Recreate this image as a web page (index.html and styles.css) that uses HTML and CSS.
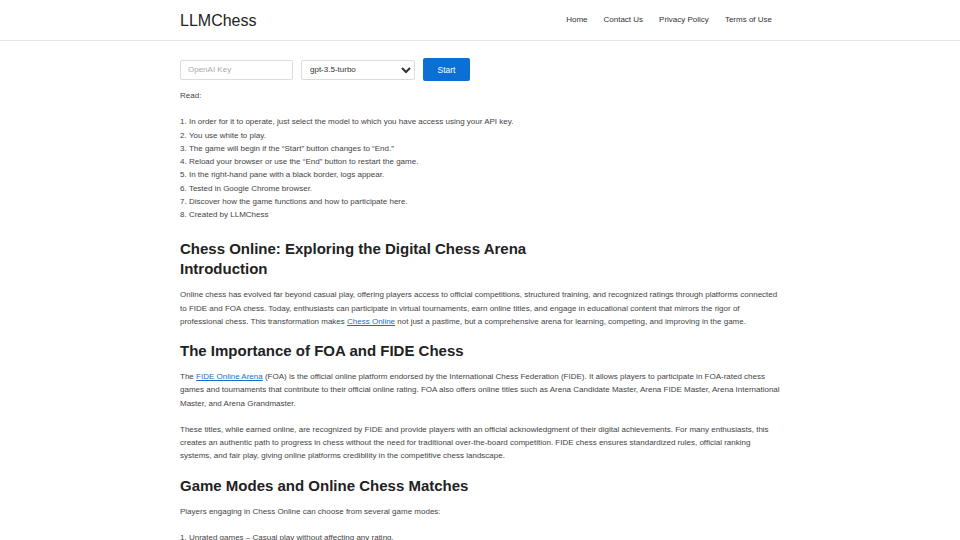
FILE: index.html
```html
<!DOCTYPE html>
<html lang="en">
<head>
<meta charset="utf-8">
<title>LLMChess</title>
<link rel="stylesheet" href="styles.css">
</head>
<body>
<header class="site-header">
  <div class="container header-inner">
    <a class="logo" href="#">LLMChess</a>
    <nav class="nav">
      <a href="#">Home</a>
      <a href="#">Contact Us</a>
      <a href="#">Privacy Policy</a>
      <a href="#">Terms of Use</a>
    </nav>
  </div>
</header>
<main class="container main">
  <div class="controls">
    <input class="key-input" type="text" placeholder="OpenAI Key">
    <select class="model-select">
      <option>gpt-3.5-turbo</option>
    </select>
    <button class="start-btn" type="button">Start</button>
  </div>
  <p class="read">Read:</p>
  <ol class="steps">
    <li>In order for it to operate, just select the model to which you have access using your API key.</li>
    <li>You use white to play.</li>
    <li>The game will begin if the “Start” button changes to “End.”</li>
    <li>Reload your browser or use the “End” button to restart the game.</li>
    <li>In the right-hand pane with a black border, logs appear.</li>
    <li>Tested in Google Chrome browser.</li>
    <li>Discover how the game functions and how to participate here.</li>
    <li>Created by LLMChess</li>
  </ol>
  <h2 class="heading first">Chess Online: Exploring the Digital Chess Arena<br>Introduction</h2>
  <p>Online chess has evolved far beyond casual play, offering players access to official competitions, structured training, and recognized ratings through platforms connected to FIDE and FOA chess. Today, enthusiasts can participate in virtual tournaments, earn online titles, and engage in educational content that mirrors the rigor of professional chess. This transformation makes <a href="#">Chess Online</a> not just a pastime, but a comprehensive arena for learning, competing, and improving in the game.</p>
  <h2 class="heading">The Importance of FOA and FIDE Chess</h2>
  <p>The <a href="#">FIDE Online Arena</a> (FOA) is the official online platform endorsed by the International Chess Federation (FIDE). It allows players to participate in FOA-rated chess games and tournaments that contribute to their official online rating. FOA also offers online titles such as Arena Candidate Master, Arena FIDE Master, Arena International Master, and Arena Grandmaster.</p>
  <p>These titles, while earned online, are recognized by FIDE and provide players with an official acknowledgment of their digital achievements. For many enthusiasts, this creates an authentic path to progress in chess without the need for traditional over-the-board competition. FIDE chess ensures standardized rules, official ranking systems, and fair play, giving online platforms credibility in the competitive chess landscape.</p>
  <h2 class="heading last">Game Modes and Online Chess Matches</h2>
  <p>Players engaging in Chess Online can choose from several game modes:</p>
  <ol class="steps">
    <li>Unrated games – Casual play without affecting any rating.</li>
    <li>Rated games – Matches that count toward official online ratings.</li>
  </ol>
</main>
</body>
</html>
```

FILE: styles.css
```css
* { box-sizing: border-box; }
html, body {
  margin: 0;
  padding: 0;
  background: #fff;
}
body {
  font-family: "Liberation Sans", Arial, sans-serif;
  font-size: 8px;
  line-height: 13.25px;
  color: #444;
}
.container {
  width: 600px;
  margin: 0 auto;
}
.site-header {
  height: 41px;
  border-bottom: 1px solid #e6e6e6;
}
.header-inner {
  height: 40px;
  padding-top: 1px;
  display: flex;
  align-items: center;
  justify-content: space-between;
}
.logo {
  font-size: 16px;
  color: #222;
  text-decoration: none;
  line-height: 20px;
}
.nav {
  display: flex;
  gap: 16px;
  margin-right: 8px;
  margin-top: -1px;
}
.nav a {
  color: #333;
  text-decoration: none;
  font-size: 8px;
}
.main {
  padding-top: 17px;
}
.controls {
  display: flex;
  align-items: center;
  gap: 8px;
}
.key-input, .model-select {
  height: 20px;
  border: 1px solid #dcdcdc;
  border-radius: 2px;
  font-family: inherit;
  font-size: 8px;
  color: #333;
  padding: 0 7px;
  background: #fff;
}
.key-input { width: 113px; }
.key-input::placeholder { color: #aaa; }
.model-select { width: 114px; padding: 0 4px; }
.start-btn {
  width: 47px;
  height: 23px;
  border: none;
  border-radius: 2px;
  background: #0b6fd6;
  color: #fff;
  font-family: inherit;
  font-size: 8.5px;
}
p {
  margin: 0 0 13px;
}
.read {
  margin-top: 8px;
}
.steps {
  list-style-position: inside;
  padding: 0;
  margin: 0 0 13px;
}
.heading {
  font-size: 15px;
  line-height: 20px;
  font-weight: bold;
  color: #222;
  margin: 12px 0 9px;
}
.heading.first { margin-top: 18px; }
.heading.last { margin-top: 11px; }
a { color: #1a6fc9; }
```
